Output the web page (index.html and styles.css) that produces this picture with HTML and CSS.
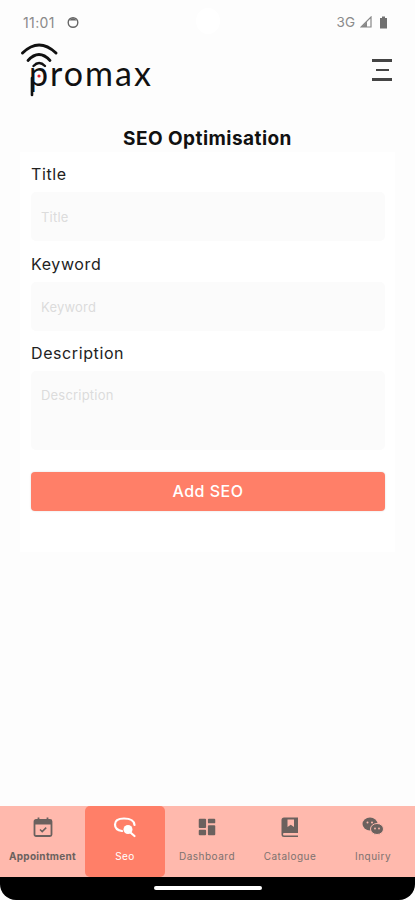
FILE: index.html
```html
<!DOCTYPE html>
<html lang="en">
<head>
    <meta charset="UTF-8">
    <meta name="viewport" content="width=device-width, initial-scale=1.0">
    <title>SEO Optimisation</title>
    <link rel="stylesheet" href="styles.css">
</head>
<body>
    <div class="screen">
        <div class="status-bar">
            <div class="status-left">
                <span>11:01</span>
                <svg class="status-icon" width="14" height="14" viewBox="0 0 14 14">
                    <circle cx="7" cy="7.5" r="4.8" fill="none" stroke="#666" stroke-width="1.4"/>
                    <path d="M3.2 5.5 Q7 0.8 10.8 5.5 Z" fill="#666"/>
                </svg>
            </div>
            <div class="camera"></div>
            <div class="status-right">
                <span>3G</span>
                <svg width="12" height="12" viewBox="0 0 12 12">
                    <path d="M11 1 V11 H1 Z" fill="none" stroke="#888" stroke-width="1.2"/>
                    <path d="M7 5.5 V11 H1.5 Z" fill="#888"/>
                </svg>
                <svg class="battery" width="9" height="13" viewBox="0 0 9 13">
                    <path d="M3 0.5 H6 V2 H8 V12.5 H1 V2 H3 Z" fill="#707070"/>
                </svg>
            </div>
        </div>

        <header class="app-header">
            <div class="logo">
                <svg class="logo-wifi" width="40" height="54" viewBox="0 0 40 54">
                    <path d="M1.5 9 Q18 -7 35 9" fill="none" stroke="#111" stroke-width="3" stroke-linecap="round"/>
                    <path d="M7 16.5 Q18 4.5 29 16.5" fill="none" stroke="#111" stroke-width="2.8" stroke-linecap="round"/>
                    <path d="M12.5 22 Q18 16 24 22" fill="none" stroke="#111" stroke-width="2.4" stroke-linecap="round"/>
                    <path d="M11 34 V51" fill="none" stroke="#111" stroke-width="2.6" stroke-linecap="round"/>
                    <circle cx="18" cy="32" r="1.6" fill="#e3202b"/>
                </svg>
                <span class="logo-text">promax</span>
            </div>
            <div class="menu-icon">
                <span class="menu-line"></span>
                <span class="menu-line menu-line-short"></span>
                <span class="menu-line"></span>
            </div>
        </header>

        <main class="content">
            <h2 class="page-title">SEO Optimisation</h2>
            <form class="seo-form">
                <label for="title">Title</label>
                <input id="title" type="text" placeholder="Title">

                <label for="keyword">Keyword</label>
                <input id="keyword" type="text" placeholder="Keyword">

                <label for="description">Description</label>
                <textarea id="description" placeholder="Description"></textarea>

                <button type="button">Add SEO</button>
            </form>
        </main>

        <nav class="bottom-nav">
            <div class="nav-item nav-bold">
                <svg width="22" height="22" viewBox="0 0 22 22">
                    <rect x="2.5" y="4" width="17" height="16" rx="1.5" fill="none" stroke="#6b615e" stroke-width="1.8"/>
                    <path d="M2.5 5 H19.5 V8.5 H2.5 Z" fill="#6b615e"/>
                    <path d="M6.5 1.5 V5 M15.5 1.5 V5" stroke="#6b615e" stroke-width="1.8"/>
                    <path d="M8 13.5 L10.2 15.6 L14.2 11.6" fill="none" stroke="#6b615e" stroke-width="1.5"/>
                </svg>
                <span>Appointment</span>
            </div>
            <div class="nav-item nav-active">
                <svg width="24" height="22" viewBox="0 0 24 22">
                    <path d="M9 15 Q2 14 2 8.5 Q2 2.5 11 2.5 Q21 2.5 21.5 9" fill="none" stroke="#fff" stroke-width="2.2" stroke-linecap="round"/>
                    <circle cx="15" cy="13.5" r="4.5" fill="#fff"/>
                    <path d="M18 17 L21.5 20" stroke="#fff" stroke-width="2.2" stroke-linecap="round"/>
                </svg>
                <span>Seo</span>
            </div>
            <div class="nav-item">
                <svg width="22" height="22" viewBox="-1 -1 24 24">
                    <rect x="2" y="2" width="8" height="10" rx="1" fill="#6b615e"/>
                    <rect x="12" y="2" width="8" height="5" rx="1" fill="#6b615e"/>
                    <rect x="12" y="9" width="8" height="11" rx="1" fill="#6b615e"/>
                    <rect x="2" y="14" width="8" height="6" rx="1" fill="#6b615e"/>
                </svg>
                <span>Dashboard</span>
            </div>
            <div class="nav-item">
                <svg width="22" height="22" viewBox="0 0 22 22">
                    <path d="M5 1.5 H19 V17 H5 Q4 17 4 18.2 Q4 19.5 5 19.5 H19 V21 H5 Q2.5 21 2.5 18.5 V4 Q2.5 1.5 5 1.5 Z" fill="#6b615e"/>
                    <path d="M8.5 3.5 H15 V11 L11.8 8.8 L8.5 11 Z" fill="#ffb9ad"/>
                </svg>
                <span>Catalogue</span>
            </div>
            <div class="nav-item">
                <svg width="24" height="22" viewBox="0 0 24 22">
                    <ellipse cx="9" cy="8" rx="7.5" ry="6.5" fill="#6b615e"/>
                    <ellipse cx="16" cy="13" rx="6.5" ry="5.5" fill="#6b615e" stroke="#ffb9ad" stroke-width="1"/>
                    <circle cx="6.5" cy="6.5" r="1" fill="#ffb9ad"/>
                    <circle cx="11" cy="6.5" r="1" fill="#ffb9ad"/>
                    <circle cx="14" cy="12.5" r="0.9" fill="#ffb9ad"/>
                    <circle cx="18" cy="12.5" r="0.9" fill="#ffb9ad"/>
                </svg>
                <span>Inquiry</span>
            </div>
        </nav>

        <div class="gesture-bar">
            <span class="home-pill"></span>
        </div>
    </div>
</body>
</html>
```

FILE: styles.css
```css
* {
    box-sizing: border-box;
}
body {
    margin: 0;
    background-color: #ffffff;
    font-family: "Inter", "Noto Sans", sans-serif;
}
.screen {
    width: 415px;
    height: 900px;
    display: flex;
    flex-direction: column;
    background-color: #fdfdfd;
    overflow: hidden;
}

/* status bar */
.status-bar {
    height: 44px;
    padding: 0 27px 0 23px;
    display: flex;
    justify-content: space-between;
    align-items: center;
    color: #8a8a8a;
    font-size: 14px;
    letter-spacing: 0.4px;
    position: relative;
}
.status-left, .status-right {
    display: flex;
    align-items: center;
}
.status-left {
    gap: 11px;
}
.status-right {
    gap: 5px;
    font-size: 13.5px;
    letter-spacing: 0;
}
.battery {
    margin-left: 2px;
}
.camera {
    position: absolute;
    left: 196px;
    top: 8px;
    width: 24px;
    height: 26px;
    border-radius: 50%;
    background-color: #ffffff;
}

/* header */
.app-header {
    height: 54px;
    padding: 0 23px 0 21px;
    display: flex;
    justify-content: space-between;
    align-items: center;
}
.logo {
    height: 54px;
    width: 135px;
    position: relative;
}
.logo-wifi {
    position: absolute;
    left: 0;
    top: 0;
    overflow: visible;
}
.logo-text {
    position: absolute;
    left: 8px;
    top: 11px;
    font-family: "Lato", sans-serif;
    font-size: 34px;
    line-height: 36px;
    letter-spacing: 2px;
    color: #111;
}
.menu-icon {
    width: 20px;
    display: flex;
    flex-direction: column;
    align-items: center;
    gap: 7px;
    margin-top: -2px;
}
.menu-line {
    width: 20px;
    height: 2.5px;
    background-color: #444;
}
.menu-line-short {
    width: 13px;
}

/* form */
.content {
    flex: 1;
    padding: 0 20px;
}
.page-title {
    margin: 30px 0 0;
    font-size: 19px;
    line-height: 22px;
    font-weight: 700;
    letter-spacing: 0.45px;
    text-align: center;
    color: #111;
}
.seo-form {
    display: flex;
    flex-direction: column;
    margin-top: 2px;
    padding: 12px 10px 41px 11px;
    background-color: #ffffff;
}
label {
    display: block;
    font-size: 16px;
    line-height: 20px;
    letter-spacing: 0.6px;
    color: #222;
    margin-bottom: 8px;
}
input, textarea {
    width: 100%;
    background-color: #fbfbfb;
    border: none;
    border-radius: 5px;
    font-family: inherit;
    font-size: 13px;
    letter-spacing: 0.2px;
    padding: 0 10px;
    margin-bottom: 13px;
    outline: none;
    resize: none;
}
input {
    height: 49px;
}
#keyword {
    margin-bottom: 12px;
}
textarea {
    height: 79px;
    padding-top: 16px;
    margin-bottom: 22px;
}
input::placeholder, textarea::placeholder {
    color: #dcdcdc;
}
button {
    height: 39px;
    padding-bottom: 2px;
    border: none;
    border-radius: 4px;
    background-color: #ff7f68;
    color: #ffffff;
    font-family: inherit;
    font-size: 16px;
    font-weight: 500;
    letter-spacing: 0.5px;
    box-shadow: 0 0 2px rgba(0, 0, 0, 0.15);
}

/* bottom nav */
.bottom-nav {
    height: 71px;
    display: grid;
    grid-template-columns: 85px 80px 84px 82px 84px;
    background-color: #ffb9ad;
}
.nav-item {
    display: flex;
    flex-direction: column;
    align-items: center;
    padding-top: 10px;
    gap: 11px;
    font-size: 10px;
    line-height: 14px;
    letter-spacing: 0.5px;
    color: #7d726f;
}
.nav-bold {
    font-weight: 700;
    letter-spacing: 0.3px;
    color: #6b615e;
}
.nav-active {
    background-color: #ff7f68;
    border-radius: 5px;
    color: #ffffff;
}

/* gesture area */
.gesture-bar {
    height: 23px;
    background-color: #000000;
    border-radius: 0 0 16px 16px;
    display: flex;
    justify-content: center;
    padding-top: 9px;
}
.home-pill {
    width: 108px;
    height: 4px;
    border-radius: 2px;
    background-color: #ffffff;
}
```
